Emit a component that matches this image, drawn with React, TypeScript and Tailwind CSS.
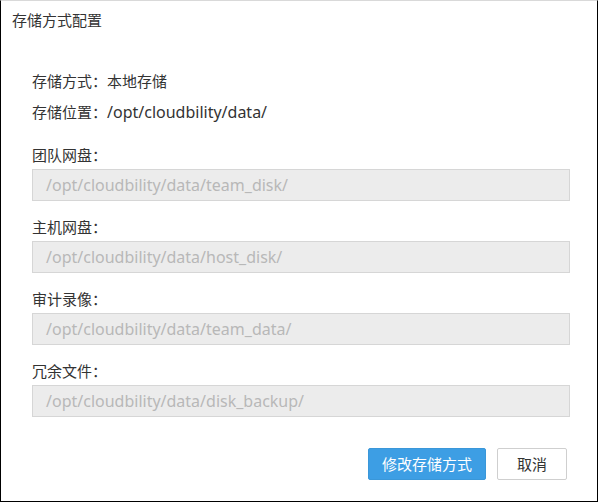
import React from "react";

const FIELDS = [
  { label: "团队网盘：", value: "/opt/cloudbility/data/team_disk/" },
  { label: "主机网盘：", value: "/opt/cloudbility/data/host_disk/" },
  { label: "审计录像：", value: "/opt/cloudbility/data/team_data/" },
  { label: "冗余文件：", value: "/opt/cloudbility/data/disk_backup/" },
];

export default function App() {
  return (
    <div
      className="w-[598px] h-[502px] bg-white border-l border-r border-b border-black border-t border-t-[#d9d9d9] text-[#333] flex flex-col"
      style={{ fontFamily: "'Segoe UI', 'Noto Sans', 'Noto Sans CJK SC', sans-serif" }}
    >
      <div className="h-[39px] pt-[9px] pl-[11px] text-[15px] leading-[20px]">存储方式配置</div>

      <div className="flex flex-col px-[31px] pt-[31px]">
        <div className="text-[15px] leading-[20px]">存储方式：本地存储</div>
        <div className="text-[15px] leading-[20px] mt-[11px]">
          存储位置：<span className="text-[16px]">/opt/cloudbility/data/</span>
        </div>

        <div className="flex flex-col gap-[16px] mt-[23px]">
          {FIELDS.map((f) => (
            <div key={f.label} className="flex flex-col gap-[4px]">
              <div className="text-[15px] leading-[20px]">{f.label}</div>
              <div className="h-[32px] w-[538px] bg-[#ececec] border border-[#d6d6d6] flex items-center px-[13px] text-[16px] text-[#b8b8b8]">
                {f.value}
              </div>
            </div>
          ))}
        </div>
      </div>

      <div className="flex justify-end gap-[11px] pr-[30px] mt-[31px]">
        <button className="h-[32px] w-[118px] bg-[#3d9ee4] text-white text-[15px] rounded-[2px] border border-[#3a97d9]">
          修改存储方式
        </button>
        <button className="h-[32px] w-[70px] bg-white text-[#333] text-[15px] rounded-[2px] border border-[#cfcfcf]">
          取消
        </button>
      </div>
    </div>
  );
}
